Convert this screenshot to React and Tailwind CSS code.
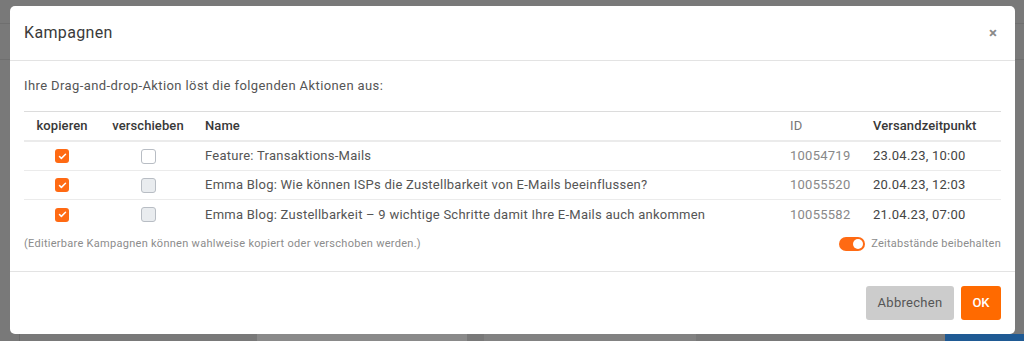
import { Check } from 'lucide-react';

const rows = [
  { name: 'Feature: Transaktions-Mails', id: '10054719', date: '23.04.23, 10:00', moveDisabled: false },
  { name: 'Emma Blog: Wie können ISPs die Zustellbarkeit von E-Mails beeinflussen?', id: '10055520', date: '20.04.23, 12:03', moveDisabled: true },
  { name: 'Emma Blog: Zustellbarkeit – 9 wichtige Schritte damit Ihre E-Mails auch ankommen', id: '10055582', date: '21.04.23, 07:00', moveDisabled: true },
];

const cols = 'grid grid-cols-[76px_96px_585px_83px_137px]';

function Checkbox({ checked, disabled }) {
  if (checked) {
    return (
      <span className="flex h-[14px] w-[14px] items-center justify-center rounded-[3px] bg-[#ff6a13]">
        <Check className="h-[9px] w-[9px] text-white" strokeWidth={4} />
      </span>
    );
  }
  return (
    <span
      className={
        'block h-[15px] w-[15px] rounded-[3px] border border-[#b8bdc4] ' +
        (disabled ? 'bg-[#e9ecef]' : 'bg-white')
      }
    />
  );
}

function Backdrop() {
  return (
    <div className="flex h-full flex-col bg-[#797979]">
      <div className="h-[24px] border-b border-[#6f6f6f]" />
      <div className="h-[36px] border-b border-[#6f6f6f]" />
      <div className="flex-1" />
      <div className="flex h-[7px] items-stretch">
        <div className="w-[20px] border-r border-[#6c6c6c]" />
        <div className="w-[237px]" />
        <div className="flex w-[210px] items-center bg-[#8a8a8a]" />
        <div className="w-[17px]" />
        <div className="flex w-[212px] items-center bg-[#828282]" />
        <div className="flex-1" />
        <div className="w-[79px] bg-[#1f5a94]" />
      </div>
    </div>
  );
}

export default function App() {
  return (
    <div className="relative h-[341px] w-[1024px] overflow-hidden font-['Roboto',sans-serif]">
      <Backdrop />
      <div className="absolute left-[10px] top-[6px] flex h-[328px] w-[1005px] flex-col rounded-[5px] bg-white">
        <div className="flex h-[55px] items-center justify-between border-b border-[#e3e3e3] pl-[14px] pr-[18px]">
          <h2 className="text-[16px] tracking-[0.35px] text-[#3a3a3a]">Kampagnen</h2>
          <span className="text-[15px] font-bold leading-none text-[#8a8a8a]">×</span>
        </div>
        <div className="flex-1 px-[14px] pt-[16px]">
          <p className="text-[13px] leading-[18px] tracking-[0.4px] text-[#555]">
            Ihre Drag-and-drop-Aktion löst die folgenden Aktionen aus:
          </p>
          <div className="mt-[16px] border-t border-[#dcdcdc]">
            <div className={cols + ' h-[30px] items-center border-b-2 border-[#ebebeb] text-[13px] font-medium tracking-[0.1px] text-[#383838]'}>
              <div className="text-center">kopieren</div>
              <div className="text-center">verschieben</div>
              <div className="pl-[9px]">Name</div>
              <div className="pl-[9px] font-normal text-[#777]">ID</div>
              <div className="pl-[9px]">Versandzeitpunkt</div>
            </div>
            {rows.map((r) => (
              <div
                key={r.id}
                className={cols + ' h-[29px] items-center border-b border-[#ebebeb] text-[13px] tracking-[0.25px] text-[#555] last:border-b-0'}
              >
                <div className="flex justify-center">
                  <Checkbox checked />
                </div>
                <div className="flex justify-center">
                  <Checkbox disabled={r.moveDisabled} />
                </div>
                <div className="pl-[9px]">{r.name}</div>
                <div className="pl-[9px] text-[#888]">{r.id}</div>
                <div className="pl-[9px] text-[#444]">{r.date}</div>
              </div>
            ))}
          </div>
          <div className="mt-[7px] flex items-center justify-between">
            <span className="text-[11px] tracking-[0.28px] text-[#8c8c8c]">
              (Editierbare Kampagnen können wahlweise kopiert oder verschoben werden.)
            </span>
            <span className="flex items-center gap-[6px]">
              <span className="flex h-[14px] w-[26px] items-center justify-end rounded-full bg-[#ff6a13] pr-[2px]">
                <span className="h-[10px] w-[10px] rounded-full bg-white" />
              </span>
              <span className="text-[11px] tracking-[0.25px] text-[#8c8c8c]">Zeitabstände beibehalten</span>
            </span>
          </div>
        </div>
        <div className="flex h-[63px] items-center justify-end gap-[7px] border-t border-[#e3e3e3] px-[14px]">
          <button className="h-[34px] w-[88px] rounded-[3px] bg-[#cccccc] text-[13px] tracking-[0.3px] text-[#555]">Abbrechen</button>
          <button className="h-[34px] w-[40px] rounded-[3px] bg-[#ff6a00] text-[13px] font-medium text-white">OK</button>
        </div>
      </div>
    </div>
  );
}
